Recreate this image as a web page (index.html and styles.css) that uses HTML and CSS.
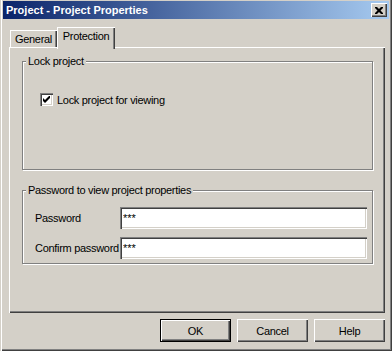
FILE: index.html
```html
<!DOCTYPE html>
<html lang="en">
<head>
    <meta charset="UTF-8">
    <title>Project - Project Properties</title>
    <link rel="stylesheet" href="styles.css">
</head>
<body>
    <div class="window">
        <div class="titlebar">
            <span class="title">Project - Project Properties</span>
            <button class="close" title="Close">
                <svg width="8" height="7" viewBox="0 0 8 7">
                    <path d="M0 0h2l2 2 2-2h2v1l-2.5 2.5 2.5 2.5v1h-2l-2-2-2 2h-2v-1l2.5-2.5-2.5-2.5z" fill="#000"/>
                </svg>
            </button>
        </div>

        <div class="client">
            <div class="tabs">
                <div class="tab tab-general">General</div>
                <div class="tab active">Protection</div>
            </div>

            <div class="panel">
                <fieldset class="group">
                    <legend>Lock project</legend>
                    <div class="group-body lock-body">
                        <label class="check-row">
                            <span class="checkbox">
                                <svg width="7" height="7" viewBox="0 0 7 7">
                                    <path d="M0 2v3l2 2 5-5v-3l-5 5z" fill="#000"/>
                                </svg>
                            </span>
                            Lock project for viewing
                        </label>
                    </div>
                </fieldset>

                <fieldset class="group group-pass">
                    <legend>Password to view project properties</legend>
                    <div class="group-body pass-body">
                        <div class="field-row">
                            <span class="field-label">Password</span>
                            <input class="field" type="text" value="***" readonly>
                        </div>
                        <div class="field-row">
                            <span class="field-label">Confirm password</span>
                            <input class="field" type="text" value="***" readonly>
                        </div>
                    </div>
                </fieldset>
            </div>

            <div class="buttons">
                <button class="btn default">OK</button>
                <button class="btn">Cancel</button>
                <button class="btn">Help</button>
            </div>
        </div>
    </div>
</body>
</html>
```

FILE: styles.css
```css
body {
    margin: 0;
    background-color: #d4d0c8;
    font-family: "Liberation Sans", Arial, sans-serif;
    font-size: 11px;
    letter-spacing: -0.3px;
    color: #000;
}

.window {
    width: 392px;
    height: 351px;
    box-sizing: border-box;
    padding: 1px 3px 3px 3px;
    background: #d4d0c8;
    box-shadow: inset 1px 0 0 #d4d0c8, inset 2px 0 0 #fff,
                inset -1px -1px 0 #404040, inset -2px -2px 0 #808080;
}

/* Barra de titulo */
.titlebar {
    height: 18px;
    display: flex;
    align-items: center;
    justify-content: space-between;
    padding: 0 2px 0 3px;
    background: linear-gradient(to right, #0a246a, #a6caf0);
}

.title {
    color: #fff;
    font-weight: bold;
    font-size: 11px;
    letter-spacing: 0;
}

.close {
    width: 16px;
    height: 14px;
    padding: 0;
    border: none;
    background: #d4d0c8;
    display: flex;
    align-items: center;
    justify-content: center;
    box-shadow: inset 1px 1px 0 #fff, inset -1px -1px 0 #404040, inset -2px -2px 0 #808080;
}

.client {
    padding: 8px 4px 0 6px;
}

/* Pestañas */
.tabs {
    display: flex;
    align-items: flex-end;
    height: 20px;
    padding-left: 1px;
    position: relative;
    z-index: 1;
}

.tab {
    height: 17px;
    box-sizing: border-box;
    padding-top: 3px;
    text-align: center;
    background: #d4d0c8;
    box-shadow: inset 1px 1px 0 #fff, inset -1px 0 0 #404040, inset -2px 0 0 #808080;
}

.tab-general {
    width: 47px;
}

.tab.active {
    width: 58px;
    height: 22px;
    margin-bottom: -2px;
}

.panel {
    height: 266px;
    box-sizing: border-box;
    padding: 8px 12px 0 13px;
    box-shadow: inset 1px 1px 0 #fff, inset -1px -1px 0 #404040, inset -2px -2px 0 #808080;
}

/* Grupos */
.group {
    margin: 0;
    padding: 0;
    min-width: 0;
    border: 1px solid #808080;
    box-shadow: 1px 1px 0 #fff, inset 1px 1px 0 #fff;
}

.group legend {
    margin-left: 3px;
    padding: 0 2px;
    line-height: 13px;
    background: #d4d0c8;
}

.lock-body {
    padding: 25px 0 63px 17px;
}

.group-pass {
    margin-top: 14px;
}

.pass-body {
    padding: 10px 0 4px 12px;
}

.check-row {
    display: flex;
    align-items: center;
    gap: 4px;
    height: 13px;
}

.checkbox {
    width: 13px;
    height: 13px;
    box-sizing: border-box;
    background: #fff;
    display: flex;
    align-items: center;
    justify-content: center;
    box-shadow: inset 1px 1px 0 #808080, inset 2px 2px 0 #404040,
                inset -1px -1px 0 #fff, inset -2px -2px 0 #d4d0c8;
}

.field-row {
    display: flex;
    align-items: center;
    height: 22px;
}

.field-row + .field-row {
    margin-top: 8px;
}

.field-label {
    width: 85px;
    flex-shrink: 0;
    white-space: nowrap;
}

.field {
    width: 247px;
    height: 22px;
    box-sizing: border-box;
    margin: 0;
    padding: 0 0 0 3px;
    border: none;
    outline: none;
    background: #fff;
    font-family: inherit;
    font-size: 11px;
    color: #000;
    box-shadow: inset 1px 1px 0 #808080, inset 2px 2px 0 #404040,
                inset -1px -1px 0 #fff, inset -2px -2px 0 #d4d0c8;
}

/* Botones */
.buttons {
    display: flex;
    justify-content: flex-end;
    gap: 6px;
    margin-top: 6px;
}

.btn {
    width: 71px;
    height: 23px;
    padding: 0;
    border: none;
    background: #d4d0c8;
    font-family: inherit;
    font-size: 11px;
    letter-spacing: inherit;
    color: #000;
    box-shadow: inset 1px 1px 0 #fff, inset -1px -1px 0 #404040, inset -2px -2px 0 #808080;
}

.btn.default {
    box-shadow: inset 0 0 0 1px #000, inset 2px 2px 0 #fff,
                inset -2px -2px 0 #404040, inset -3px -3px 0 #808080;
}
```
